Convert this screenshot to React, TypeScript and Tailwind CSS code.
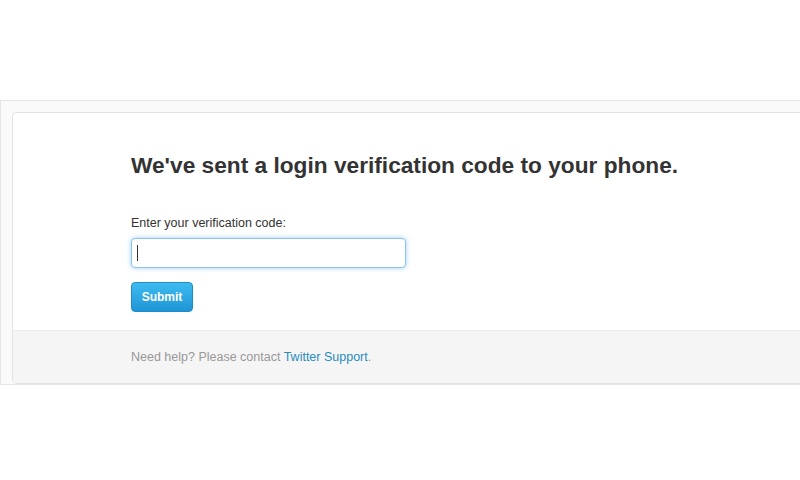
export default function App() {
  return (
    <div className="w-[800px] h-[480px] bg-white overflow-hidden" style={{ fontFamily: '"Liberation Sans", Arial, sans-serif' }}>
      <div className="mt-[100px] border-t border-l border-b border-[#e6e6e6] bg-[#fafafa] pl-[11px] pt-[11px] pb-0 h-[285px]">
        <div className="bg-white border border-r-0 border-[#e3e3e3] rounded-l-[5px] h-[272px] flex flex-col overflow-hidden">
          <div className="pl-[118px] pt-[38px] flex-1">
            <h1 className="text-[22.7px] font-bold text-[#333] leading-[28px]">
              We've sent a login verification code to your phone.
            </h1>
            <p className="mt-[36px] text-[12.5px] text-[#333] leading-[16px]">Enter your verification code:</p>
            <div className="mt-[7px] w-[275px] h-[30px] rounded-[4px] border border-[#8cc3ea] shadow-[0_0_5px_rgba(82,168,236,0.55)] bg-white flex items-center pl-[5px]">
              <div className="w-px h-[16px] bg-[#333]" />
            </div>
            <button className="mt-[14px] w-[62px] h-[30px] rounded-[4px] bg-gradient-to-b from-[#3dbcf0] to-[#1e95d6] border border-[#1f8cc9] text-white text-[12px] font-bold">
              Submit
            </button>
          </div>
          <div className="h-[53px] bg-[#f5f5f5] border-t border-[#ececec] pl-[118px] flex items-center">
            <p className="text-[12.5px] text-[#999]">
              Need help? Please contact <span className="text-[#2b8bbd]">Twitter Support</span>.
            </p>
          </div>
        </div>
      </div>
    </div>
  );
}
